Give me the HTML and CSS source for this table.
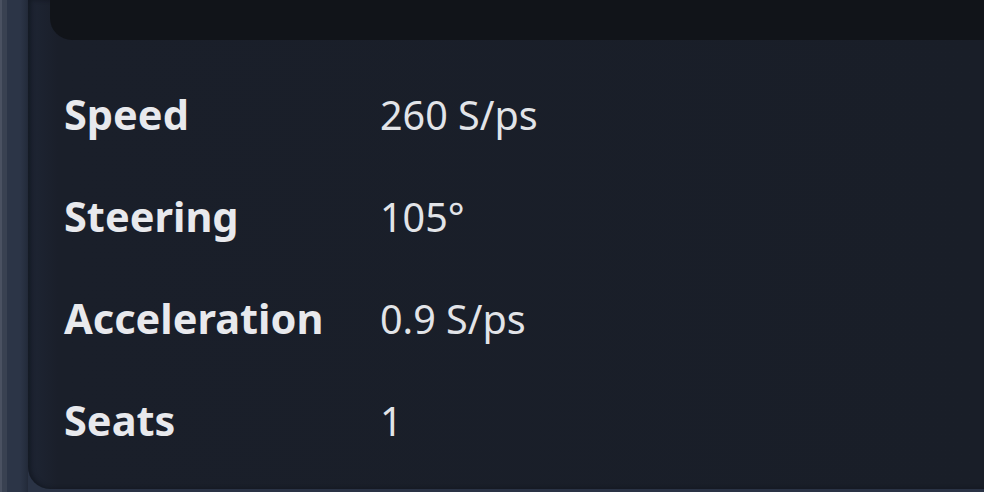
FILE: index.html
```html
<!DOCTYPE html>
<html lang="en">
<head>
<meta charset="utf-8">
<title>Vehicle stats</title>
<link rel="stylesheet" href="styles.css">
</head>
<body>
<div class="page">
  <div class="rail"></div>
  <div class="card">
    <div class="header"></div>
    <dl class="stats">
      <div class="row"><dt class="label">Speed</dt><dd class="value">260 S/ps</dd></div>
      <div class="row"><dt class="label">Steering</dt><dd class="value">105°</dd></div>
      <div class="row"><dt class="label">Acceleration</dt><dd class="value">0.9 S/ps</dd></div>
      <div class="row"><dt class="label">Seats</dt><dd class="value">1</dd></div>
    </dl>
  </div>
</div>
</body>
</html>
```
FILE: styles.css
```css
* { box-sizing: border-box; }
html, body {
  margin: 0;
  padding: 0;
  width: 984px;
  height: 492px;
  overflow: hidden;
  background: #2a3345;
  font-family: "Noto Sans", "Open Sans", sans-serif;
}
.page {
  display: flex;
  height: 492px;
  background: #2a3345;
}
.rail {
  width: 28px;
  flex: none;
  background: linear-gradient(to right,
    #4a5161 0, #4a5161 2px,
    #394151 2px, #394151 7px,
    #2c3547 7px, #2c3547 20px,
    #252d3d 26px, #222938 28px);
}
.card {
  flex: 1;
  height: 489px;
  background: linear-gradient(to right, #1e2534 0, #1a1f2a 30px, #191e28 100%);
  border-bottom-left-radius: 22px;
  box-shadow: inset 3px 0 4px rgba(10, 14, 20, 0.5);
  display: flex;
  flex-direction: column;
}
.header {
  height: 40px;
  margin-left: 22px;
  background: #111419;
  border-bottom-left-radius: 22px;
  flex: none;
}
.stats {
  margin: 0;
  padding: 23px 0 0 36px;
  display: flex;
  flex-direction: column;
}
.row {
  display: flex;
  align-items: baseline;
  height: 102px;
  line-height: 102px;
}
.label {
  width: 316px;
  flex: none;
  font-size: 41.5px;
  font-weight: 700;
  color: #e8e9ed;
}
.value {
  margin: 0;
  font-size: 39.5px;
  font-weight: 400;
  color: #e2e4e8;
}
```
